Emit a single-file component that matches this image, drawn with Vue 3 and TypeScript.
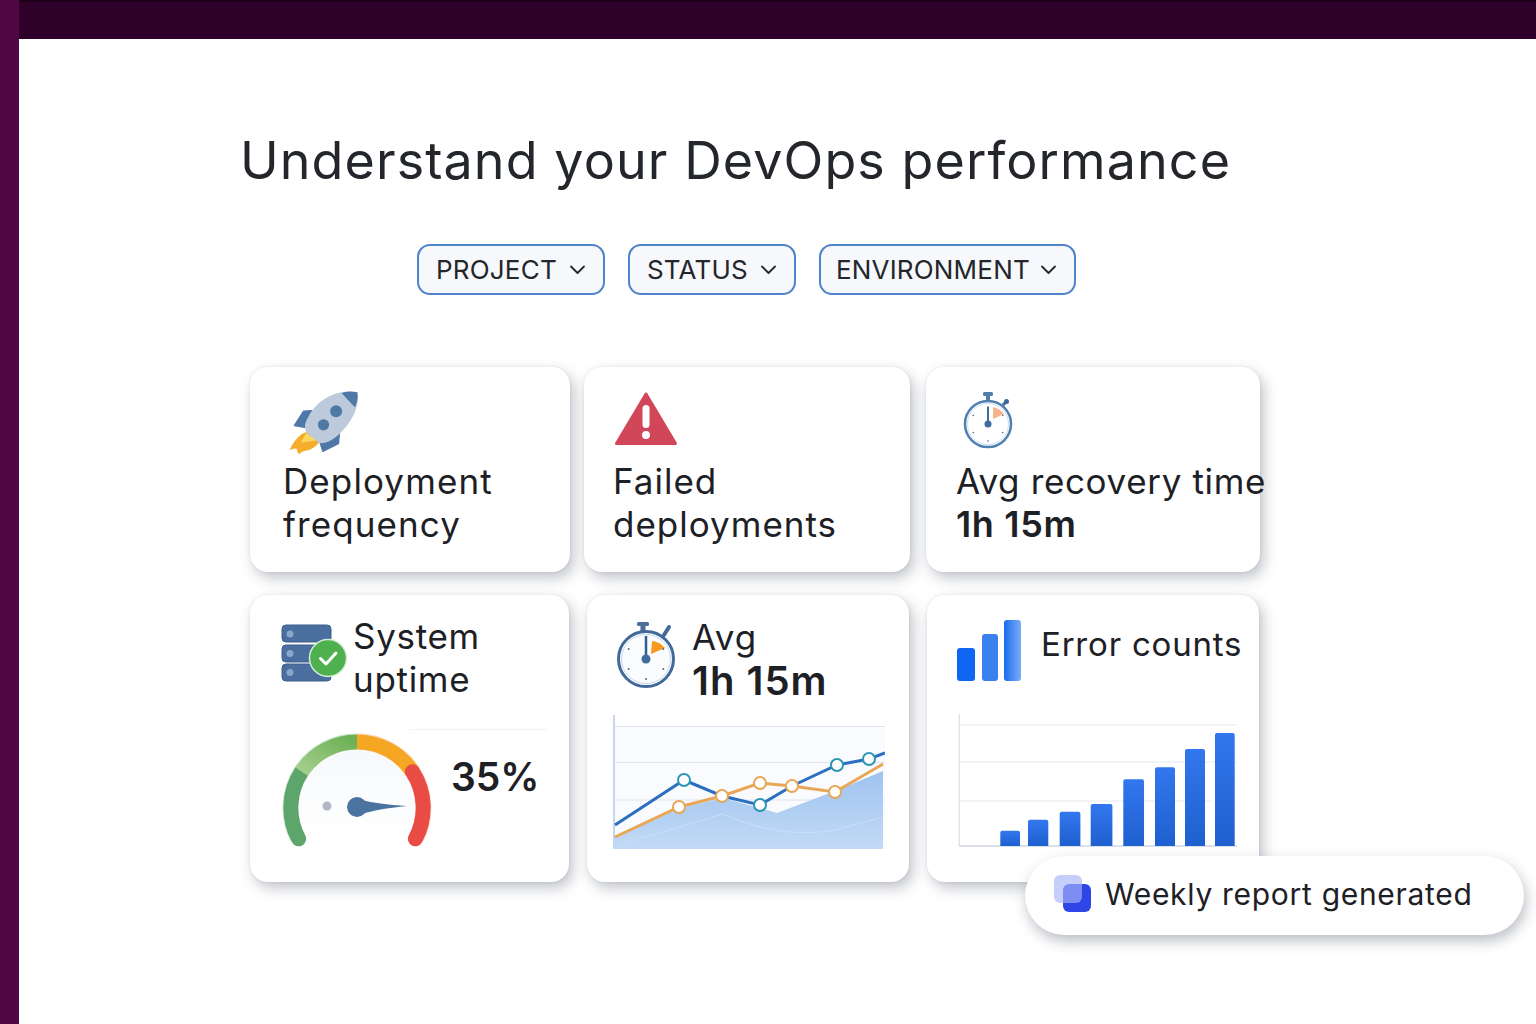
<script setup lang="ts">
interface Pt { x: number; y: number }
interface Bar { x: number; y: number; w: number }

const filters: string[] = ['PROJECT', 'STATUS', 'ENVIRONMENT']
const blue: Pt[] = [{ x: 2, y: 111 }, { x: 71, y: 66 }, { x: 109, y: 82 }, { x: 147, y: 91 }, { x: 179, y: 72 }, { x: 224, y: 51 }, { x: 256, y: 45 }, { x: 272, y: 39 }]
const orange: Pt[] = [{ x: 2, y: 123 }, { x: 66, y: 93 }, { x: 109, y: 82 }, { x: 147, y: 69 }, { x: 179, y: 72 }, { x: 222, y: 78 }, { x: 270, y: 50 }]
const toPoints = (list: Pt[]): string => list.map((p) => `${p.x},${p.y}`).join(' ')
const blueMarks: Pt[] = [blue[1], blue[3], blue[5], blue[6]]
const orangeMarks: Pt[] = [orange[1], orange[2], orange[3], orange[4], orange[5]]
const bars: Bar[] = [
  { x: 42.3, y: 118.7, w: 19.7 }, { x: 70, y: 107.7, w: 20.3 }, { x: 101.7, y: 99.7, w: 20.7 }, { x: 132.7, y: 92, w: 21.7 },
  { x: 165.3, y: 67.3, w: 20.7 }, { x: 197, y: 55.3, w: 20 }, { x: 227, y: 37, w: 20 }, { x: 257, y: 21, w: 19.7 }
]
const ticks: number[] = [0, 60, 120, 180, 240, 300]
</script>

<template>
  <div class="shell">
    <aside class="rail"></aside>
    <div class="column">
      <header class="topbar"></header>
      <main class="main">
        <h1 class="title">Understand your DevOps performance</h1>
        <div class="filters">
          <button v-for="f in filters" :key="f" class="filter" type="button">
            <span>{{ f }}</span>
            <svg class="chev" viewBox="0 0 16 10" width="17" height="10"><path d="M1.5 1.5 8 8l6.5-6.5" fill="none" stroke="#22262c" stroke-width="1.8" stroke-linecap="round" stroke-linejoin="round" /></svg>
          </button>
        </div>

        <section class="row row-one">
          <article class="card c1">
            <svg class="rocket" viewBox="110 55 220 205" width="73" height="68">
              <path d="M170 185C150 188 128 215 118 240Q132 232 140 236 140 245 145 252 160 240 175 240 195 232 208 215Z" fill="#f5ad2c" />
              <path d="M168 188 152 216 199 210Z" fill="#fbd85d" />
              <path d="M185 120 160 122 132 165 172 172Z" fill="#4f78a8" stroke="#4f78a8" stroke-width="4" stroke-linejoin="round" />
              <path d="M268 188 265 220 218 243 208 212Z" fill="#4f78a8" stroke="#4f78a8" stroke-width="4" stroke-linejoin="round" />
              <path d="M322 65C265 52 190 85 165 160 163 172 165 182 170 188L207 218C240 222 272 190 295 160 315 130 328 100 322 65Z" fill="#bccadb" />
              <path d="M322 65C300 60 285 62 275 68 290 85 305 100 315 110 322 95 325 80 322 65Z" fill="#4f78a8" />
              <circle cx="258" cy="122" r="18" fill="#4f78a3" />
              <circle cx="220" cy="163" r="17" fill="#4f78a3" />
            </svg>
            <p class="label">Deployment<br />frequency</p>
          </article>
          <article class="card c2">
            <svg class="warn" viewBox="0 0 64 56" width="64" height="56">
              <path d="M32 3 61.5 52.5H2.500Z" fill="#d2465a" stroke="#d2465a" stroke-width="3" stroke-linejoin="round" />
              <rect x="28.500" y="14" width="7" height="23" rx="3.500" fill="#fff" />
              <circle cx="32" cy="44" r="4" fill="#fff" />
            </svg>
            <p class="label">Failed<br />deployments</p>
          </article>
          <article class="card c3">
            <svg class="watch-small" viewBox="0 0 52 58" width="52" height="58">
              <rect x="21" y="1" width="10" height="4" rx="1.500" fill="#4f7fae" />
              <rect x="24" y="4" width="4" height="5" fill="#4f7fae" />
              <path d="M41 14 44 11" stroke="#3f679c" stroke-width="3" />
              <circle cx="44.500" cy="10.500" r="2.500" fill="#3f679c" />
              <circle cx="26" cy="33" r="23" fill="#fff" stroke="#4f7fae" stroke-width="2.500" />
              <circle cx="26" cy="33" r="20.500" fill="none" stroke="#cfe0f0" stroke-width="1" />
              <path d="M31 16A18 18 0 0 1 42 23L31 28Z" fill="#f7b38c" />
              <circle v-for="t in ticks" :key="t" :cx="26 + 17 * Math.sin(t * Math.PI / 180)" :cy="33 - 17 * Math.cos(t * Math.PI / 180)" r="0.8" fill="#4a5f7a" />
              <path d="M26 33V16" stroke="#3f6c9c" stroke-width="2" />
              <circle cx="26" cy="33" r="3.500" fill="#3f6c9c" />
            </svg>
            <p class="label nowrap">Avg recovery time<br /><strong>1h 15m</strong></p>
          </article>
        </section>

        <section class="row row-two">
          <article class="card d1">
            <div class="head">
              <svg class="server" viewBox="0 0 68 60" width="68" height="60">
                <g fill="#4a6f9e" stroke="#3d5f8b" stroke-width="1">
                  <rect x="1" y="1" width="49" height="17" rx="4" />
                  <rect x="1" y="21" width="49" height="17" rx="4" />
                  <rect x="1" y="40" width="49" height="17" rx="4" />
                </g>
                <g fill="#8ba5cb">
                  <circle cx="9" cy="10" r="3.500" /><circle cx="9" cy="29.500" r="3.500" /><circle cx="9" cy="48.500" r="3.500" />
                </g>
                <circle cx="47" cy="34" r="18.500" fill="#4fb04f" stroke="#d5ecd5" stroke-width="1.500" />
                <path d="M39.500 34.500 45 40 55 29" fill="none" stroke="#fff" stroke-width="3" stroke-linecap="round" stroke-linejoin="round" />
              </svg>
              <p class="label">System<br />uptime</p>
            </div>
            <div class="gauge-row">
              <svg class="gauge" viewBox="0 0 150 125" width="150" height="125">
                <defs>
                  <linearGradient id="lg" x1="0" y1="1" x2="1" y2="0"><stop offset="0" stop-color="#a5cf8e" /><stop offset="1" stop-color="#6cb155" /></linearGradient>
                  <linearGradient id="fd" x1="0" y1="0" x2="0" y2="1"><stop offset="0" stop-color="#f6f8fb" /><stop offset="1" stop-color="#ffffff" /></linearGradient>
                </defs>
                <path d="M16.600 105.800A66 66 0 1 1 133.400 105.800Z" fill="url(#fd)" />
                <path d="M9 108A74 74 0 0 1 75 1" fill="none" stroke="#cfe8cf" stroke-width="1.500" />
                <path d="M75 1A74 74 0 0 1 141 108" fill="none" stroke="#fbdcc8" stroke-width="1.500" />
                <g fill="none" stroke-width="15">
                  <path d="M16.600 105.800A66 66 0 0 1 19.600 38.700" stroke="#5da66b" stroke-linecap="round" />
                  <path d="M19.600 38.700A66 66 0 0 1 75 9" stroke="url(#lg)" />
                  <path d="M75 9A66 66 0 0 1 130.400 38.700" stroke="#f5a623" />
                  <path d="M130.400 38.700A66 66 0 0 1 133.400 105.800" stroke="#e84c44" stroke-linecap="round" />
                </g>
                <circle cx="45" cy="73" r="4.500" fill="#b3b8c6" />
                <path d="M80 67Q95 71 125 73 95 76 80 81Z" fill="#4b73a0" />
                <circle cx="75" cy="74" r="10" fill="#4b73a0" />
              </svg>
              <strong class="pct">35%</strong>
            </div>
          </article>
          <article class="card d2">
            <div class="head">
              <svg class="watch" viewBox="0 0 62 68" width="62" height="68">
                <rect x="20" y="1" width="12" height="4" rx="1.500" fill="#4a6f9a" />
                <rect x="23.500" y="4" width="5" height="6" fill="#4a6f9a" />
                <path d="M47 14 52 6" stroke="#3f6c9c" stroke-width="4" stroke-linecap="round" />
                <circle cx="29" cy="38" r="27.500" fill="#fbfcfe" stroke="#416a9a" stroke-width="3" />
                <circle cx="29" cy="38" r="24.500" fill="none" stroke="#c9d9ea" stroke-width="1" />
                <path d="M35 20A19 19 0 0 1 48 27L34 33Z" fill="#f79a1f" />
                <circle v-for="t in ticks" :key="t" :cx="29 + 20 * Math.sin(t * Math.PI / 180)" :cy="38 - 20 * Math.cos(t * Math.PI / 180)" r="1" fill="#5a6a80" />
                <path d="M29 38V15" stroke="#2d5f8e" stroke-width="2.500" />
                <circle cx="29" cy="38" r="4.500" fill="#3f6c9c" />
              </svg>
              <p class="label">Avg<br /><strong class="big">1h 15m</strong></p>
            </div>
            <svg class="chart line" viewBox="0 0 272 136" width="272" height="136">
              <defs>
                <linearGradient id="ar" x1="0" y1="0" x2="0" y2="1"><stop offset="0" stop-color="#9fc3ef" /><stop offset="1" stop-color="#c2daf6" /></linearGradient>
              </defs>
              <rect x="2" y="12" width="270" height="123" fill="#fafbfe" />
              <path d="M1 1V134" stroke="#b6cbe3" stroke-width="1.500" />
              <g stroke="#dfe4ec" stroke-width="1">
                <path d="M2 12.500H272" /><path d="M2 48.500H272" /><path d="M2 86H272" />
              </g>
              <path d="M0 124 67 94 110 84 147 94 164 99 222 77 270 57V135H0Z" fill="url(#ar)" />
              <path d="M2 132 110 100C150 118 190 122 222 116L270 103" fill="none" stroke="#c9dff7" stroke-width="1" />
              <polyline :points="toPoints(blue)" fill="none" stroke="#2a6fc0" stroke-width="3" />
              <polyline :points="toPoints(orange)" fill="none" stroke="#e8a657" stroke-width="3" />
              <circle v-for="(p, i) in blueMarks" :key="'b' + i" :cx="p.x" :cy="p.y" r="6" fill="#fff" stroke="#2b97b5" stroke-width="2" />
              <circle v-for="(p, i) in orangeMarks" :key="'o' + i" :cx="p.x" :cy="p.y" r="6" fill="#fff" stroke="#e8a657" stroke-width="2" />
            </svg>
          </article>
          <article class="card d3">
            <div class="head">
              <svg class="signal" viewBox="0 0 65 62" width="65" height="62">
                <defs>
                  <linearGradient id="sg" x1="0" y1="0" x2="1" y2="0"><stop offset="0" stop-color="#1a6cf0" /><stop offset="1" stop-color="#7cacf7" /></linearGradient>
                  <linearGradient id="bg" x1="0" y1="0" x2="0" y2="1"><stop offset="0" stop-color="#3377ee" /><stop offset="1" stop-color="#1f60cf" /></linearGradient>
                </defs>
                <rect x="0" y="28" width="18" height="33" rx="3" fill="#0f66f2" />
                <rect x="25" y="14" width="16" height="47" rx="3" fill="#3a80ef" />
                <rect x="47" y="0" width="17" height="61" rx="3" fill="url(#sg)" />
              </svg>
              <p class="label tight">Error counts</p>
            </div>
            <svg class="chart bars" viewBox="0 0 282 136" width="282" height="136">
              <path d="M1.300 2V134" stroke="#dfe3ea" stroke-width="1.500" />
              <g stroke="#e6e9ef" stroke-width="1">
                <path d="M2 13H279" /><path d="M2 50H279" /><path d="M2 89H254" />
              </g>
              <path d="M1 134H279" stroke="#cfd5e0" stroke-width="1.500" />
              <path v-for="(b, i) in bars" :key="i" :d="`M${b.x} 134V${b.y + 2}q0-2 2-2H${b.x + b.w - 2}q2 0 2 2V134Z`" fill="url(#bg)" />
            </svg>
          </article>
        </section>

        <div class="toast">
          <svg class="stack" viewBox="0 0 40 40" width="40" height="40">
            <rect x="10" y="10" width="28" height="28" rx="6" fill="#2f46e6" />
            <rect x="1" y="1" width="28" height="28" rx="6" fill="#a8b4f8" fill-opacity="0.65" />
          </svg>
          <span>Weekly report generated</span>
        </div>
      </main>
    </div>
  </div>
</template>

<style>
html, body { margin: 0; background: #fff; }
</style>

<style scoped>
.shell { display: flex; width: 1536px; height: 1024px; overflow: hidden; font-family: Inter, "Liberation Sans", sans-serif; color: #1d2025; }
.rail { width: 19px; background: #4f0844; flex: none; }
.column { flex: 1; display: flex; flex-direction: column; min-width: 0; }
.topbar { height: 39px; flex: none; background: #2f0029; border-top: 2px solid #1c0018; box-sizing: border-box; }
.main { position: relative; flex: 1; background: #fff; padding: 88px 0 0 223px; }
.title { margin: 0 0 0 -2px; font-size: 52px; font-weight: 400; line-height: 68px; letter-spacing: 1.1px; white-space: nowrap; color: #23262b; }
.filters { display: flex; gap: 23px; margin: 49px 0 0 175px; }
.filter { display: flex; align-items: center; gap: 12px; height: 51px; box-sizing: border-box; padding: 0 17px; border: 2px solid #4f84c9; border-radius: 13px; background: #f6f8fc; font: 400 26px Inter, sans-serif; letter-spacing: 0.2px; color: #23262b; }
.filter:last-child { padding-left: 15px; gap: 10px; }
.row { display: flex; margin-left: 8px; }
.row-one { gap: 14px; margin-top: 72px; }
.row-two { gap: 18px; margin-top: 23px; }
.card { box-sizing: border-box; background: #fff; border-radius: 18px; box-shadow: 4px 6px 14px rgba(50, 60, 80, 0.3), 0 0 3px rgba(50, 60, 80, 0.1); flex: none; }
.label { margin: 0; font-size: 35px; line-height: 43px; font-weight: 400; letter-spacing: 1px; color: #1d2025; }
.label strong { font-weight: 600; font-size: 36px; }
.label strong.big { font-size: 40px; }
.label.tight { font-size: 33px; letter-spacing: 0.8px; margin-top: 3px; }
.nowrap { white-space: nowrap; }
.c1, .c2, .c3 { height: 205px; }
.c1 { width: 320px; padding: 22px 0 0 34px; }
.c2 { width: 326px; padding: 24px 0 0 30px; margin-right: 2px; }
.c3 { width: 334px; padding: 24px 0 0 30px; }
.rocket, .warn, .watch-small { display: block; }
.rocket { margin: 0 0 0 3px; height: 68px; }
.c1 .label { margin: 3px 0 0 -1px; letter-spacing: 1.1px; }
.c2 .warn { margin-bottom: 13px; }
.c2 .label { margin-left: -1px; }
.c3 .watch-small { margin: 0 0 11px 6px; }
.c3 .label { letter-spacing: 0.65px; }
.d1, .d2, .d3 { height: 287px; }
.d1 { width: 319px; padding: 20px 0 0 31px; }
.d2 { width: 322px; padding: 26px 0 0 30px; }
.d3 { width: 332px; padding: 25px 0 0 30px; }
.head { display: flex; gap: 10px; }
.d1 .head { gap: 4px; }
.d1 .label { letter-spacing: 0.7px; }
.d1 .server { margin-top: 9px; }
.d2 .head { gap: 13px; }
.d2 .label { margin-top: -5px; }
.d3 .head { gap: 19px; align-items: flex-start; }
.gauge-row { position: relative; display: flex; margin: 32px 0 0 1px; }
.gauge-row::before { content: ""; position: absolute; left: 128px; right: 22px; top: -4px; height: 1px; background: #f1f2f5; }
.pct { font-size: 39px; font-weight: 600; margin: 21px 0 0 19px; line-height: 46px; }
.chart { display: block; margin-top: 30px; }
.chart.bars { margin-left: 1px; }
.chart.line { margin-top: 10px; margin-left: -4px; }
.toast { position: absolute; left: 1006px; top: 817px; width: 499px; height: 79px; box-sizing: border-box; padding: 0 0 4px 28px; display: flex; align-items: center; gap: 12px; border-radius: 40px; background: #fff; box-shadow: 2px 6px 14px rgba(30, 40, 60, 0.3); font-size: 30px; letter-spacing: 0.7px; color: #1d2025; }
</style>
